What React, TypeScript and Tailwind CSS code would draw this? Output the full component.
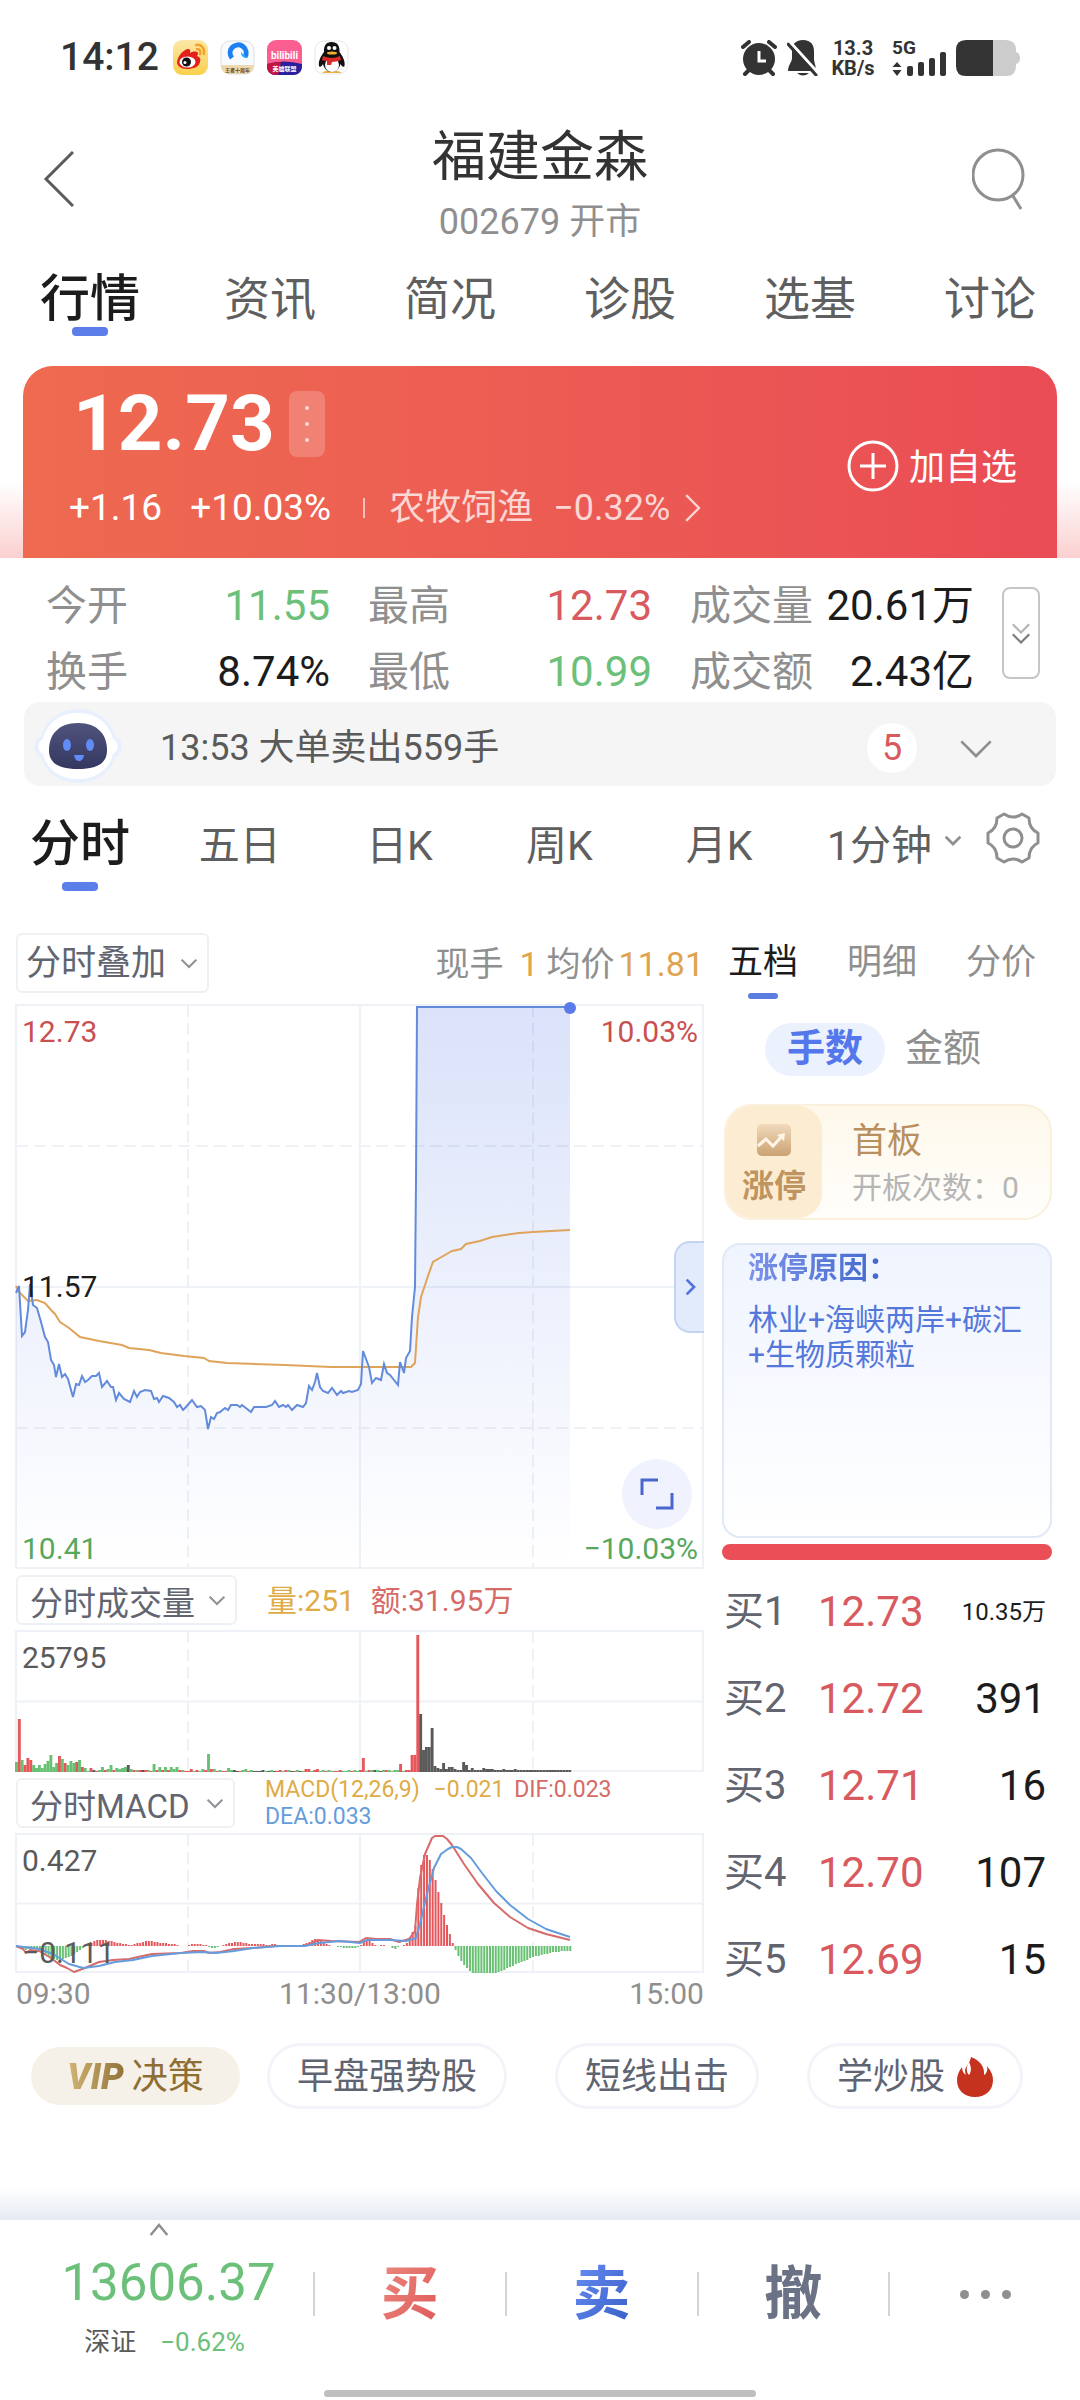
import { useState } from 'react';
import type { ReactNode } from 'react';
import clsx from 'clsx';

const NAV_TABS = ['行情', '资讯', '简况', '诊股', '选基', '讨论'];
const PERIODS = ['分时', '五日', '日K', '周K', '月K'];
const QUEUE_TABS = ['五档', '明细', '分价'];

const STATS = [
    { label: '今开', value: '11.55', color: 'text-[#6cc07a]' },
    { label: '最高', value: '12.73', color: 'text-[#d85a5f]' },
    { label: '成交量', value: '20.61万', color: 'text-[#1c1c1c]' },
    { label: '换手', value: '8.74%', color: 'text-[#1c1c1c]' },
    { label: '最低', value: '10.99', color: 'text-[#6cc07a]' },
    { label: '成交额', value: '2.43亿', color: 'text-[#1c1c1c]' },
];

const BIDS = [
    { level: '买1', price: '12.73', volume: '10.35万', small: true },
    { level: '买2', price: '12.72', volume: '391' },
    { level: '买3', price: '12.71', volume: '16' },
    { level: '买4', price: '12.70', volume: '107' },
    { level: '买5', price: '12.69', volume: '15' },
];

const PRICE_LINE =
    '0,288 3,281 6,331 9,327 12,305 14,279 17,300 21,303 25,317 29,332 32,337 35,355 38,360 40,372 43,359 46,372 49,369 52,374 55,385 57,392 60,379 63,380 66,371 69,377 72,375 76,371 80,371 83,368 86,382 91,376 95,382 97,382 100,395 103,388 108,394 114,397 118,386 121,392 124,387 129,385 135,386 138,394 141,393 143,397 147,391 153,393 158,397 161,402 164,400 167,405 170,402 176,395 181,402 185,401 189,405 192,424 195,412 198,414 201,408 204,407 209,403 212,405 215,400 221,400 224,402 226,400 235,407 238,402 250,402 256,400 259,396 263,402 267,400 270,402 272,400 276,405 281,400 287,402 290,398 293,381 296,385 299,377 301,368 304,382 307,386 312,388 316,383 321,390 325,386 327,388 333,386 336,387 342,385 345,379 347,346 353,362 356,378 360,373 365,375 368,359 371,368 374,370 382,380 384,357 388,368 390,353 394,346 396,312 399,282 400,175 401,2 554,2';

const AVERAGE_LINE =
    '0,281 3,287 12,296 21,295 29,298 35,305 39,309 44,317 53,323 64,332 83,336 106,340 113,343 133,345 145,348 168,351 188,353 193,356 211,358 269,360 315,362 395,362 399,358 402,312 405,292 413,268 417,257 429,250 436,246 445,244 450,239 464,236 476,232 489,230 503,228 517,227 554,225';

const DIF_LINE =
    '0,112 7,115 10,119 14,116 23,117 35,124 44,131 51,134 58,138 69,134 83,128 97,126 113,125 122,123 136,120 165,119 177,117 188,117 193,119 204,118 218,115 237,114 259,112 287,112 294,110 302,106 315,107 343,108 350,104 360,105 374,105 383,108 393,105 399,97 401,70 404,44 409,20 416,4 419,2 427,2 431,5 436,11 448,30 462,50 478,69 494,83 512,94 530,100 554,106';

const DEA_LINE =
    '0,112 23,115 37,120 53,130 67,134 83,132 99,128 117,126 136,122 165,119 186,118 200,119 218,117 237,114 264,112 289,112 303,109 324,107 344,109 351,106 374,106 390,107 400,104 404,90 411,60 418,34 425,20 432,15 436,13 441,13 445,15 455,24 466,39 480,57 494,71 512,85 530,95 554,103';

// one entry per trading minute: colour letter (r up, g down, k flat) + bar height
const VOLUME_BARS = (
    'g10 r53 g12 r7 r14 r12 g7 g4 g7 g4 g8 g11 g17 g5 g9 r16 g13 r9 g7 g11 g9 r10 g12 r5 g4 g1 r4 k2 r1 g2 g5 r2 g3 g7 r2 g4 g3 g4 g5 k7 ' +
    'g3 r2 g2 r2 k2 r2 g2 r1 g8 r2 g5 r2 g5 r2 g5 g3 g5 r2 g2 r1 r1 r3 g1 r2 g1 g3 r2 g18 r3 g3 r1 g2 r1 r1 g4 g2 k2 k1 r1 g2 ' +
    'g3 r1 g2 k1 k1 k1 k2 g1 k1 g2 k1 r1 r2 g1 r2 g2 k1 r1 g2 k1 g1 r3 r3 g1 r2 r3 g1 g2 r1 g2 g1 r1 r1 r2 g1 g1 g2 r1 g2 g1 ' +
    'r2 r14 g1 r2 g2 k2 g2 k1 g2 r2 g2 g1 g2 g2 r8 g1 r2 r2 r17 r17 r137 k58 k22 k25 k25 k44 k6 k4 k3 k9 k3 k5 k5 k3 k2 k2 k10 k7 k2 k4 ' +
    'k2 k2 k2 k4 k3 k3 k3 k2 k2 k2 k3 k2 k2 k2 k3 k2 k2 k2 k2 k2 k2 k2 k2 k2 k2 k2 k2 k2 k2 k2 k2 k2 k2 k2'
).split(' ');

const MACD_BARS = [
    0, 0, -2, -4, -3, -2, -2, -3, -4, -6, -8, -10, -12, -13, -14, -14, -13, -12, -11, -10, -8, -6, -4, -2, 0, 1, 3, 5, 6, 6,
    6, 6, 5, 5, 4, 3, 3, 2, 2, 1, 1, 2, 3, 3, 4, 5, 5, 5, 4, 4, 3, 3, 3, 2, 2, 2, 1, 0, 0, 0,
    1, 2, 2, 2, 2, 1, 1, -1, -2, -2, -1, 0, 1, 2, 3, 3, 4, 4, 4, 3, 3, 2, 2, 2, 2, 2, 2, 1, 1, 2,
    2, 1, 1, 1, 0, 0, 0, 1, 1, 1, 2, 3, 4, 6, 7, 6, 5, 3, 2, 1, 0, 0, -1, -1, -2, -2, -2, -2, -2, -1,
    1, 5, 6, 5, 3, 1, 0, 1, 1, 0, 0, -2, -3, -1, 0, 1, 3, 8, 14, 20, 58, 81, 91, 91, 86, 77, 66, 54, 43, 31,
    21, 12, 3, -4, -10, -15, -19, -22, -25, -27, -27, -27, -27, -27, -27, -27, -27, -27, -26, -25, -24, -22, -21, -20, -18, -17,
    -16, -15, -14, -12, -11, -10, -10, -9, -8, -8, -7, -6, -6, -6, -5, -5, -5, -5,
];

const MINUTE = 688 / 240;
const BAR_COLORS: Record<string, string> = { r: '#e5575b', g: '#68c172', k: '#5a5a5a' };

interface ChevronProps {
    direction?: 'up' | 'down' | 'right';
    strokeWidth?: number;
    className?: string;
}

function Chevron({ direction = 'down', strokeWidth = 2, className }: ChevronProps) {
    const paths = {
        up: 'M2 18 12 6 22 18',
        down: 'M1 7 12 18 23 7',
        right: 'M7 1 18 12 7 23',
    };
    return (
        <svg viewBox="0 0 24 24" className={className} fill="none" stroke="currentColor" strokeWidth={strokeWidth}>
            <path d={paths[direction]} />
        </svg>
    );
}

function Dropdown({ label, className }: { label: string; className?: string }) {
    return (
        <div className={clsx('relative flex shrink-0 items-center rounded-md border-2 border-[#eef1f4] text-[#62656f]', className)}>
            <select aria-label={label} className="h-full w-full appearance-none bg-transparent pt-[2px] outline-none">
                <option>{label}</option>
            </select>
            <Chevron strokeWidth={3} className="pointer-events-none absolute right-[10px] h-4 w-4 text-[#8f9196]" />
        </div>
    );
}

function Grid({ height, rows, children }: { height: number; rows: 'quarters' | 'half'; children: ReactNode }) {
    return (
        <svg viewBox={`0 0 688 ${height}`} className="block h-auto w-full overflow-visible">
            <g stroke="#eef1f5" strokeWidth={2} fill="none">
                <rect x={0} y={0} width={687} height={height - 1} />
                <path d={`M344 0V${height} M0 ${height / 2}H688`} />
                <path d={`M172 0V${height} M517 0V${height}`} strokeDasharray="12 6" />
                {rows === 'quarters' && (
                    <path d={`M0 ${height / 4}H688 M0 ${(height * 3) / 4}H688`} strokeDasharray="12 6" />
                )}
            </g>
            {children}
        </svg>
    );
}

function StatusBar() {
    return (
        <div className="flex h-[115px] items-center px-[60px] text-[#333]">
            <span className="text-[39px] font-medium">14:12</span>
            <div className="ml-[14px] flex gap-3">
                <svg viewBox="0 0 35 35" className="h-[35px] w-[35px]">
                    <defs>
                        <linearGradient id="weibo" x1="0" y1="0" x2="0" y2="1">
                            <stop offset="0" stopColor="#fce7a8" />
                            <stop offset="1" stopColor="#fbd04b" />
                        </linearGradient>
                    </defs>
                    <rect width="35" height="35" rx="9" fill="url(#weibo)" />
                    <path d="M4 22C5 15 12 8 16 9c2 1 1 3 1 4 3-2 7-2 8 0 0 2-1 3-1 3 3 1 4 3 3 6-1 5-7 7-13 7C8 29 4 26 4 22Z" fill="#e2211c" />
                    <ellipse cx="14.500" cy="22" rx="8" ry="5.500" fill="#fff" />
                    <circle cx="13.500" cy="22" r="4.500" fill="#111" />
                    <circle cx="12" cy="22.500" r="1.500" fill="#fff" />
                    <path d="M23 5c5-1 9 3 8 9M24 9c3 0 4 2 3 5" fill="none" stroke="#f3a32c" strokeWidth="2.500" strokeLinecap="round" />
                </svg>
                <svg viewBox="0 0 35 35" className="h-[35px] w-[35px]">
                    <rect x="1" y="1" width="33" height="33" rx="9" fill="#f7faff" stroke="#ddd" />
                    <path d="M1 25h33c0 5-3 9-9 9H10c-6 0-9-4-9-9Z" fill="#ecd9b0" />
                    <path d="M12 18a8 8 0 1 1 13-1" fill="none" stroke="#1e7ff0" strokeWidth="5" />
                    <path d="M27 18c-4 0-6-2-6-6Z" fill="#27b2f5" />
                    <text x="17.500" y="32" textAnchor="middle" className="text-[5px] font-bold" fill="#6b4a22">
                        王者十周年
                    </text>
                </svg>
                <svg viewBox="0 0 35 35" className="h-[35px] w-[35px]">
                    <rect width="35" height="35" rx="9" fill="#fb5e90" />
                    <path d="M0 24q17-5 35 0v2c0 6-4 9-9 9H9c-5 0-9-3-9-9Z" fill="#2a1f9c" />
                    <path d="M0 24q8-2 14-2l-3 13H9c-5 0-9-3-9-9Z" fill="#c5133f" />
                    <text x="17.500" y="19" textAnchor="middle" className="text-[10px] font-bold" fill="#fff">
                        bilibili
                    </text>
                    <text x="17.500" y="31" textAnchor="middle" className="text-[6px] font-bold" fill="#fff">
                        英雄联盟
                    </text>
                </svg>
                <svg viewBox="0 0 35 35" className="h-[35px] w-[35px]">
                    <rect x="1" y="1" width="33" height="33" rx="9" fill="#fff" stroke="#e6e6e6" />
                    <path d="M8 33q3-3 9-2 7-1 11 2Z" fill="#e8b23a" />
                    <path d="M17.500 2C12 2 9.500 6 10 12c-3 4-6 9-5 14 1 2 3 0 4-2 1 5 5 8 8.500 8s8-3 9-8c1 2 3 4 4 2 1-5-2-10-5-14 .5-6-2-10-8-10Z" fill="#111" />
                    <ellipse cx="18" cy="25" rx="7" ry="7" fill="#fff" />
                    <path d="M9 16q9 4 17 0l1 4q-5 2-9 2l-1 3h-4v-4q-3 0-5-1Z" fill="#dd2a2a" />
                    <circle cx="15" cy="8" r="2" fill="#fff" />
                    <circle cx="20.500" cy="8" r="2" fill="#fff" />
                    <ellipse cx="18" cy="13" rx="5" ry="1.500" fill="#f1b02c" />
                </svg>
            </div>
            <svg viewBox="0 0 36 36" className="ml-auto h-9 w-9">
                <path d="M2 7 8 2M34 7 28 2M4 34l5-5M32 34l-5-5" stroke="#333" strokeWidth="4" strokeLinecap="round" />
                <circle cx="18" cy="19" r="16" fill="#333" />
                <path d="M18 11v10h7" fill="none" stroke="#fff" strokeWidth="3" />
            </svg>
            <svg viewBox="0 0 31 36" className="ml-[10px] h-9 w-[31px]">
                <path d="M16 0C8 0 5 5 5 11v7c0 4-4 7-4 13h28c0-6-2-8-2-13v-7C27 5 24 0 16 0Z" fill="#333" />
                <path d="M10 33h12q-6 5-12 0Z" fill="#333" />
                <path d="M3 2 33 35" stroke="#fff" strokeWidth="3" />
                <path d="M1 4 29 35" stroke="#333" strokeWidth="3" strokeLinecap="round" />
            </svg>
            <div className="ml-3 w-[46px] text-center text-[20px] font-bold leading-[20px]">
                <div>13.3</div>
                <div>KB/s</div>
            </div>
            <div className="ml-4">
                <div className="text-[19px] font-bold leading-4">5G</div>
                <svg viewBox="0 0 56 26" className="-mt-[6px] h-[26px] w-[56px]" fill="#333">
                    <path d="M5 12 9.500 17h-9ZM5 26 .5 20h9Z" />
                    <rect x="15" y="16" width="6" height="10" rx="2" />
                    <rect x="26" y="12" width="6" height="14" rx="2" />
                    <rect x="37" y="8" width="6" height="18" rx="2" />
                    <rect x="48" y="2" width="6" height="24" rx="2" />
                </svg>
            </div>
            <svg viewBox="0 0 64 36" className="ml-2 h-9 w-16">
                <path d="M36 0h14q10 0 10 10v2q4 1 4 6t-4 6v2q0 10-10 10H36Z" fill="#ccc" />
                <path d="M37 0H10Q0 0 0 10v16q0 10 10 10h27Z" fill="#333" />
            </svg>
        </div>
    );
}

function Robot() {
    return (
        <svg viewBox="0 0 92 76" className="h-[76px] w-[92px]">
            <defs>
                <linearGradient id="visor" x1="0" y1="0" x2="0" y2="1">
                    <stop offset="0" stopColor="#50537c" />
                    <stop offset="1" stopColor="#343760" />
                </linearGradient>
            </defs>
            <path d="M46 1c19 0 33 12 37 27 9 4 9 17 0 21-4 15-18 26-37 26S13 64 9 49c-9-4-9-17 0-21C13 13 27 1 46 1Z" fill="#e9f0fd" />
            <path d="M46 5c18 0 31 10 35 26 6 2 6 13 0 15-4 16-17 25-35 25S15 62 11 46c-6-2-6-13 0-15C15 15 28 5 46 5Z" fill="#fff" />
            <path d="M46 15c20 0 29 12 29 27 0 13-9 19-29 19s-29-6-29-19c0-15 9-27 29-27Z" fill="url(#visor)" />
            <ellipse cx="35" cy="37" rx="4" ry="6" fill="#628cf5" />
            <ellipse cx="58" cy="37" rx="4" ry="6" fill="#628cf5" />
            <path d="M42 47h10q-1 6-5 6t-5-6Z" fill="#628cf5" />
        </svg>
    );
}

function QuoteCard() {
    return (
        <section className="bg-[linear-gradient(to_top,#fbd0d0,#fff_40%)] px-[23px]">
            <div className="flex h-[192px] items-start justify-between rounded-t-[30px] bg-gradient-to-r from-[#ee6a50] to-[#ea4c55] pl-[46px] pr-10 text-white">
                <div className="pt-[18px]">
                    <div className="flex items-center gap-[14px] pl-1">
                        <span className="text-[78px] font-bold leading-[80px]">12.73</span>
                        <button aria-label="更多" className="flex h-[66px] w-9 flex-col items-center justify-center gap-3 rounded-lg bg-white/20">
                            <i className="h-1 w-1 rounded-full bg-white/70" />
                            <i className="h-1 w-1 rounded-full bg-white/70" />
                            <i className="h-1 w-1 rounded-full bg-white/70" />
                        </button>
                    </div>
                    <div className="mt-[22px] flex items-center text-[37px] leading-[44px]">
                        <span>+1.16</span>
                        <span className="ml-7">+10.03%</span>
                        <i className="ml-8 h-5 w-[2px] bg-white/60" />
                        <a href="#sector" className="ml-6 flex items-center text-[36px] text-white/75">
                            农牧饲渔
                            <span className="ml-5">−0.32%</span>
                            <Chevron direction="right" className="ml-2 h-7 w-7" />
                        </a>
                    </div>
                </div>
                <button className="flex h-full items-center gap-[10px] pt-2 text-[36px]">
                    <svg viewBox="0 0 52 52" className="h-[52px] w-[52px]" fill="none" stroke="currentColor" strokeWidth={3}>
                        <circle cx="26" cy="26" r="24" />
                        <path d="M26 13v26M13 26h26" />
                    </svg>
                    <span className="pt-1">加自选</span>
                </button>
            </div>
        </section>
    );
}

function PriceChart() {
    return (
        <div className="relative mt-3 text-[30px] leading-[40px]">
            <Grid height={564} rows="quarters">
                <defs>
                    <linearGradient id="area" x1="0" y1="0" x2="0" y2="564" gradientUnits="userSpaceOnUse">
                        <stop offset="0" stopColor="#5a7be8" stopOpacity="0.22" />
                        <stop offset="1" stopColor="#5a7be8" stopOpacity="0" />
                    </linearGradient>
                </defs>
                <polygon points={`${PRICE_LINE} 554,562 0,562`} fill="url(#area)" />
                <polyline points={AVERAGE_LINE} fill="none" stroke="#dfa45a" strokeWidth={2} />
                <polyline points={PRICE_LINE} fill="none" stroke="#628bdc" strokeWidth={2} />
                <circle cx={554} cy={3} r={6} fill="#5a7be8" />
            </Grid>
            <span className="absolute left-[6px] top-[7px] text-[#c94f51]">12.73</span>
            <span className="absolute right-[6px] top-[7px] text-[#c94f51]">10.03%</span>
            <span className="absolute left-[6px] top-1/2 -translate-y-1/2 text-[#1c1c1c]">11.57</span>
            <span className="absolute bottom-0 left-[6px] text-[#57a75c]">10.41</span>
            <span className="absolute bottom-0 right-[6px] text-[#57a75c]">−10.03%</span>
            <button
                aria-label="收起盘口"
                className="absolute right-0 top-1/2 flex h-[92px] w-[30px] -translate-y-1/2 items-center justify-center rounded-l-2xl border-2 border-r-0 border-[#c3d3f2] bg-[#e1ebfc] text-[#5273dc]"
            >
                <Chevron direction="right" strokeWidth={4} className="h-4 w-4" />
            </button>
            <button
                aria-label="全屏"
                className="absolute bottom-10 right-3 flex h-[70px] w-[70px] items-center justify-center rounded-full bg-[#f0f3fd]"
            >
                <svg viewBox="0 0 34 34" className="h-[34px] w-[34px]" fill="none" stroke="#4a67cf" strokeWidth={3}>
                    <path d="M2 18V3h16M32 16v15H16" />
                </svg>
            </button>
        </div>
    );
}

function VolumeChart() {
    return (
        <div className="relative mt-[6px] text-[30px] leading-[40px] text-[#5a5a5a]">
            <Grid height={141} rows="half">
                {VOLUME_BARS.map((bar, i) => {
                    const height = Number(bar.slice(1));
                    return <rect key={i} x={i * MINUTE - 1} y={141 - height} width={2.900} height={height} fill={BAR_COLORS[bar[0]]} />;
                })}
            </Grid>
            <span className="absolute left-[6px] top-[7px]">25795</span>
        </div>
    );
}

function MacdChart() {
    return (
        <div className="relative mt-[6px] text-[30px] leading-[40px] text-[#5a5a5a]">
            <Grid height={139} rows="half">
                {MACD_BARS.map((value, i) => (
                    <rect
                        key={i}
                        x={i * MINUTE}
                        y={value > 0 ? 112 - value : 112}
                        width={2}
                        height={Math.abs(value)}
                        fill={value > 0 ? '#e5575b' : '#68c172'}
                    />
                ))}
                <polyline points={DIF_LINE} fill="none" stroke="#d96a6a" strokeWidth={2} strokeLinejoin="round" />
                <polyline points={DEA_LINE} fill="none" stroke="#659cdc" strokeWidth={2} strokeLinejoin="round" />
            </Grid>
            <span className="absolute left-[6px] top-[7px]">0.427</span>
            <span className="absolute bottom-0 left-[6px]">−0.111</span>
        </div>
    );
}

function OrderPanel() {
    const [tab, setTab] = useState('五档');

    return (
        <aside className="w-[330px] shrink-0">
            <div className="flex justify-between pl-[6px] pr-4">
                {QUEUE_TABS.map((name) => (
                    <button key={name} onClick={() => setTab(name)} className="flex flex-col items-center text-[35px] leading-[60px]">
                        <span className={tab === name ? 'text-[#1c1c1c]' : 'text-[#8f8f8f]'}>{name}</span>
                        <i className={clsx('h-[6px] w-[30px] rounded-sm', tab === name && 'bg-[#5b7de0]')} />
                    </button>
                ))}
            </div>
            <div className="mt-6 flex h-[53px] items-center gap-5 pl-[43px] text-[38px] leading-[50px]">
                <button className="flex h-full w-[120px] justify-center rounded-full bg-[#ecf1fe] font-bold text-[#5478ec]">手数</button>
                <button className="flex h-full text-[#8f8f8f]">金额</button>
            </div>

            {/* limit-up badge */}
            <div className="ml-[2px] mt-7 flex h-[116px] items-stretch overflow-hidden rounded-[28px] border-2 border-[#fbf0dc] bg-gradient-to-b from-[#fef8eb] to-[#fffefb]">
                <div className="flex w-[96px] flex-col items-center justify-center rounded-r-[24px] bg-[#fcedd2] pt-2 text-[32px] font-bold leading-[44px] text-[#bf9460]">
                    <svg viewBox="0 0 34 32" className="mb-2 h-8 w-[34px]">
                        <defs>
                            <linearGradient id="trend" x1="0" y1="0" x2="0" y2="1">
                                <stop offset="0" stopColor="#f1dabd" />
                                <stop offset="1" stopColor="#cba273" />
                            </linearGradient>
                        </defs>
                        <rect width="34" height="32" rx="5" fill="url(#trend)" />
                        <path d="M1 22 9 15l7 7 9-10" fill="none" stroke="#fff5e4" strokeWidth="3" />
                        <path d="m20 11 8-2-1 8Z" fill="#fff5e4" />
                    </svg>
                    涨停
                </div>
                <div className="flex flex-col justify-center whitespace-nowrap pl-[30px] pt-1">
                    <span className="text-[35px] leading-[48px] text-[#b98f5f]">首板</span>
                    <span className="text-[30px] leading-[44px] text-[#b5b5b5]">开板次数：0</span>
                </div>
            </div>

            <div className="mt-[23px] h-[295px] rounded-[18px] border-2 border-[#e1e9f6] bg-gradient-to-b from-[#eff4fe] to-white pl-6 text-[30px]">
                <h2 className="inline-block bg-gradient-to-r from-[#7c93ea] to-[#3a62c9] bg-clip-text font-bold leading-[42px] text-transparent">涨停原因：</h2>
                <p className="mt-3 leading-[35px] text-[#5577dc]">
                    林业+海峡两岸+碳汇
                    <br />
                    +生物质颗粒
                </p>
            </div>
            <div className="mt-[6px] h-4 rounded-full bg-[#ea4f57]" />

            <table className="mt-2 w-full">
                <tbody>
                    {BIDS.map((bid) => (
                        <tr key={bid.level} className="h-[87px] text-[42px]">
                            <td className="w-[96px] pl-[2px] text-left text-[40px] text-[#62656f]">{bid.level}</td>
                            <td className="text-left text-[#d85a5f]">{bid.price}</td>
                            <td className={clsx('pr-[6px] text-right text-[#1c1c1c]', bid.small && 'text-[24px]')}>{bid.volume}</td>
                        </tr>
                    ))}
                </tbody>
            </table>
        </aside>
    );
}

function Shortcuts() {
    return (
        <div className="mt-7 flex items-center justify-between pl-[31px] pr-[57px] text-[36px] text-[#5f6472]">
            <div className="flex items-center gap-[27px]">
                <button className="flex h-[58px] w-[209px] items-center justify-center gap-1 rounded-full bg-[#f6f1e8] pt-[2px] text-[#8d6f35]">
                    <b className="bg-gradient-to-r from-[#d3b676] to-[#8d6f35] bg-clip-text pr-1 font-black italic text-transparent">VIP</b>
                    决策
                </button>
                <button className="h-[66px] rounded-full border-[3px] border-[#f3f4fa] px-[27px] pt-[2px]">早盘强势股</button>
            </div>
            <button className="h-[66px] rounded-full border-[3px] border-[#f3f4fa] px-[27px] pt-[2px]">短线出击</button>
            <button className="flex h-[66px] items-center gap-3 rounded-full border-[3px] border-[#f3f4fa] px-[27px] pt-[2px]">
                学炒股
                <svg viewBox="0 0 36 40" className="h-10 w-9" fill="#c5331f">
                    <path d="M14 0c-1 6-5 9-6 13 0 3 1 5 1 5s-4-2-4-8C2 14 0 18 0 23c0 10 7 17 18 17s18-7 18-17c0-6-3-10-6-14 1 5-1 8-3 9C28 9 22 3 14 0Z" />
                    <path d="M12 5c-3 5-3 10 0 13 3-4 2-9 0-13Z" fill="#fff" />
                </svg>
            </button>
        </div>
    );
}

function TradeBar() {
    return (
        <footer className="mt-auto">
            <div className="h-8 bg-gradient-to-b from-white to-[#e6eaf3]" />
            <div className="flex h-[150px] bg-white">
                <button className="flex w-[313px] flex-col items-center pl-6 text-[#6cc07a]">
                    <Chevron direction="up" strokeWidth={3} className="mr-5 h-5 w-5 text-[#8f8f8f]" />
                    <span className="mt-3 text-[51px] leading-[62px]">13606.37</span>
                    <span className="mr-2 mt-2 flex gap-6 text-[26px] leading-[40px]">
                        <span className="text-[#5a5a5a]">深证</span>−0.62%
                    </span>
                </button>
                <div className="mt-[52px] flex h-11 flex-1 items-center divide-x-2 divide-[#d4d4d4] border-l-2 border-[#d4d4d4] text-[58px] font-bold">
                    <button className="flex h-full flex-1 items-center justify-center">
                        <span className="bg-gradient-to-br from-[#eb8b80] to-[#dd5357] bg-clip-text text-transparent">买</span>
                    </button>
                    <button className="flex h-full flex-1 items-center justify-center">
                        <span className="bg-gradient-to-br from-[#6c90f5] to-[#345bc4] bg-clip-text text-transparent">卖</span>
                    </button>
                    <button className="flex h-full flex-1 items-center justify-center text-[#6b7285]">撤</button>
                    <button aria-label="更多操作" className="flex h-full flex-1 items-center justify-center gap-3">
                        <i className="h-[9px] w-[9px] rounded-full bg-[#8f8f8f]" />
                        <i className="h-[9px] w-[9px] rounded-full bg-[#8f8f8f]" />
                        <i className="h-[9px] w-[9px] rounded-full bg-[#8f8f8f]" />
                    </button>
                </div>
            </div>
            <div className="flex h-[30px] items-end justify-center pb-[3px]">
                <div className="h-[7px] w-2/5 rounded-full bg-[#bfbfbf]" />
            </div>
        </footer>
    );
}

export default function App() {
    const [nav, setNav] = useState('行情');
    const [period, setPeriod] = useState('分时');

    return (
        <div className="flex min-h-screen flex-col bg-white font-[Roboto,'Noto_Sans_CJK_SC',sans-serif]">
            <StatusBar />

            <header className="flex h-[136px] items-start justify-between px-10">
                <button aria-label="返回" className="w-[68px] pt-[36px] text-[#5a5a5a]">
                    <svg viewBox="0 0 34 56" className="h-14 w-[34px]" fill="none" stroke="currentColor" strokeWidth={3}>
                        <path d="M33 1 6 28 33 55" />
                    </svg>
                </button>
                <div className="pt-[11px] text-center">
                    <h1 className="text-[54px] leading-[64px] text-[#333]">福建金森</h1>
                    <p className="mt-[10px] text-[36px] leading-[44px] text-[#8f8f8f]">002679 开市</p>
                </div>
                <button aria-label="搜索" className="flex w-[68px] justify-end pt-[33px] text-[#8f8f8f]">
                    <svg viewBox="0 0 68 64" className="h-16 w-[68px]" fill="none" stroke="currentColor" strokeWidth={3}>
                        <circle cx="26" cy="27" r="25" />
                        <path d="M41 48 49 61" />
                    </svg>
                </button>
            </header>

            <nav className="grid h-[115px] grid-cols-6 pt-[18px]">
                {NAV_TABS.map((name) => (
                    <button
                        key={name}
                        onClick={() => setNav(name)}
                        className={clsx(
                            'flex flex-col items-center leading-[60px]',
                            nav === name ? 'text-[50px] font-medium text-[#1c1c1c]' : 'text-[46px] text-[#5f5f5f]'
                        )}
                    >
                        {name}
                        {nav === name && <i className="-mt-[2px] h-[9px] w-9 rounded-[4px] bg-[#5b7ee8]" />}
                    </button>
                ))}
            </nav>

            <QuoteCard />

            <section className="flex items-start gap-7 pl-[46px] pr-10 pt-[18px]">
                <dl className="grid flex-1 grid-cols-3 gap-x-[38px] gap-y-[6px] text-[41px] leading-[60px]">
                    {STATS.map((stat) => (
                        <div key={stat.label} className="flex justify-between whitespace-nowrap">
                            <dt className="text-[#8f8f8f]">{stat.label}</dt>
                            <dd className={clsx('text-[42px]', stat.color)}>{stat.value}</dd>
                        </div>
                    ))}
                </dl>
                <button aria-label="展开" className="mt-[11px] flex h-[92px] w-[38px] flex-col items-center justify-center rounded-lg border-2 border-[#c6c6c6]">
                    <Chevron strokeWidth={3} className="h-[18px] w-[18px] text-[#b5b5b5]" />
                    <Chevron strokeWidth={3} className="-mt-2 h-[18px] w-[18px] text-[#7d7d7d]" />
                </button>
            </section>

            <section className="mx-6 flex h-[84px] items-center rounded-2xl bg-[#f5f5f5] pl-2 pr-16 pt-1 text-[36px] text-[#5a5a5a]">
                <Robot />
                <span className="ml-9 pt-1">13:53 大单卖出559手</span>
                <span className="ml-auto mt-1 flex h-[50px] w-[50px] items-center justify-center rounded-full bg-white text-[#d85a5f]">5</span>
                <button aria-label="展开消息" className="ml-[43px] pt-1">
                    <Chevron className="block h-8 w-8 text-[#8f8f8f]" />
                </button>
            </section>

            <nav className="flex h-[147px] items-start pr-10 pt-[26px] text-[41px] leading-[64px] text-[#5f5f5f]">
                <div className="grid flex-1 grid-cols-5">
                    {PERIODS.map((name) => (
                        <button
                            key={name}
                            onClick={() => setPeriod(name)}
                            className={clsx('flex flex-col items-center', period === name ? 'text-[50px] font-medium text-[#1c1c1c]' : 'pt-[2px]')}
                        >
                            {name}
                            {period === name && <i className="mt-[6px] h-[9px] w-9 rounded-[4px] bg-[#5b7ee8]" />}
                        </button>
                    ))}
                </div>
                <div className="ml-7 flex items-start gap-[25px]">
                    <label className="flex items-center pt-[2px]">
                        <select aria-label="分钟周期" className="appearance-none bg-transparent outline-none">
                            <option>1分钟</option>
                        </select>
                        <Chevron strokeWidth={4} className="mb-3 ml-3 h-4 w-4 text-[#8f8f8f]" />
                    </label>
                    <button aria-label="设置">
                        <svg viewBox="0 0 54 52" className="h-[52px] w-[54px]" fill="none" stroke="#8f8f8f" strokeWidth={3} strokeLinejoin="round">
                            <path d="M18 2Q27 8 36 2L43 6Q43 17 52 21V31Q43 35 43 46L36 50Q27 44 18 50L11 46Q11 35 2 31V21Q11 17 11 6Z" />
                            <circle cx="27" cy="26" r="9" />
                        </svg>
                    </button>
                </div>
            </nav>

            <main className="flex gap-[18px] pl-4 pr-7">
                <div className="min-w-0 flex-1">
                    <div className="flex items-center justify-between text-[35px]">
                        <Dropdown label="分时叠加" className="h-[60px] w-[193px] pl-2" />
                        <p className="flex pt-[2px] text-[34px] text-[#8f8f8f]">
                            现手
                            <span className="ml-4 mr-2 text-[#e0a350]">1</span>
                            均价
                            <span className="ml-1 text-[#e0a350]">11.81</span>
                        </p>
                    </div>
                    <PriceChart />

                    <div className="mt-[6px] flex h-[50px] items-center gap-[30px] text-[33px]">
                        <Dropdown label="分时成交量" className="h-[50px] w-[221px] pl-3" />
                        <p className="flex gap-4 text-[30px]">
                            <span className="text-[#dfab45]">量:251</span>
                            <span className="text-[#d56a66]">额:31.95万</span>
                        </p>
                    </div>
                    <VolumeChart />

                    <div className="mt-[6px] flex h-[50px] items-center gap-[30px] text-[33px]">
                        <Dropdown label="分时MACD" className="h-[50px] w-[219px] pl-3" />
                        <p className="text-[23px] leading-[27px] text-[#dfab45]">
                            MACD(12,26,9) <span className="ml-2">−0.021</span> <span className="ml-1 text-[#d56a66]">DIF:0.023</span>
                            <br />
                            <span className="text-[#659cdc]">DEA:0.033</span>
                        </p>
                    </div>
                    <MacdChart />
                    <div className="flex justify-between text-[30px] leading-[42px] text-[#8f8f8f]">
                        <span>09:30</span>
                        <span>11:30/13:00</span>
                        <span>15:00</span>
                    </div>
                </div>
                <OrderPanel />
            </main>

            <Shortcuts />
            <TradeBar />
        </div>
    );
}
